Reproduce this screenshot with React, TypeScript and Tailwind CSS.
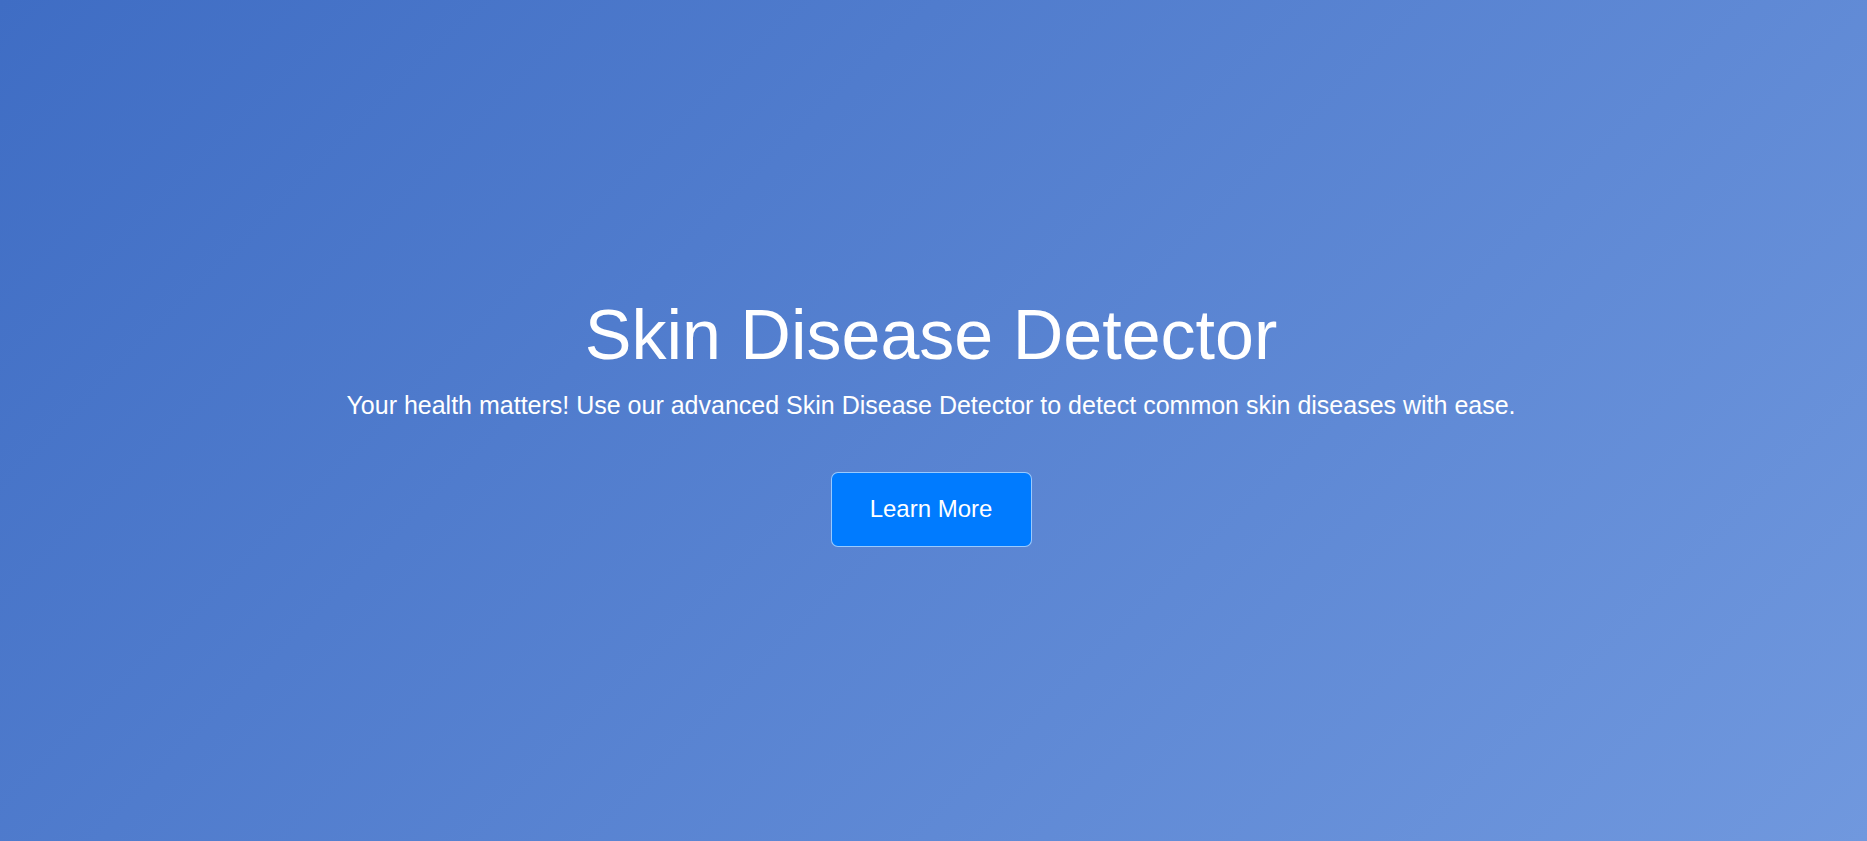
import React from "react";

const App: React.FC = () => {
  return (
    <div className="h-[841px] w-full pr-[5px] flex flex-col items-center justify-center bg-[linear-gradient(135deg,#3f6dc4,#7098de)] text-white font-['Liberation_Sans',Arial,sans-serif]">
      <h1 className="text-[70px] leading-[80px] font-normal">Skin Disease Detector</h1>
      <p className="mt-[14px] text-[25px] leading-[32px]">
        Your health matters! Use our advanced Skin Disease Detector to detect common skin diseases with ease.
      </p>
      <button className="mt-[51px] w-[201px] h-[75px] rounded-[7px] border border-white/60 bg-[#007bff] text-[24px] text-white">
        Learn More
      </button>
    </div>
  );
};

export default App;
